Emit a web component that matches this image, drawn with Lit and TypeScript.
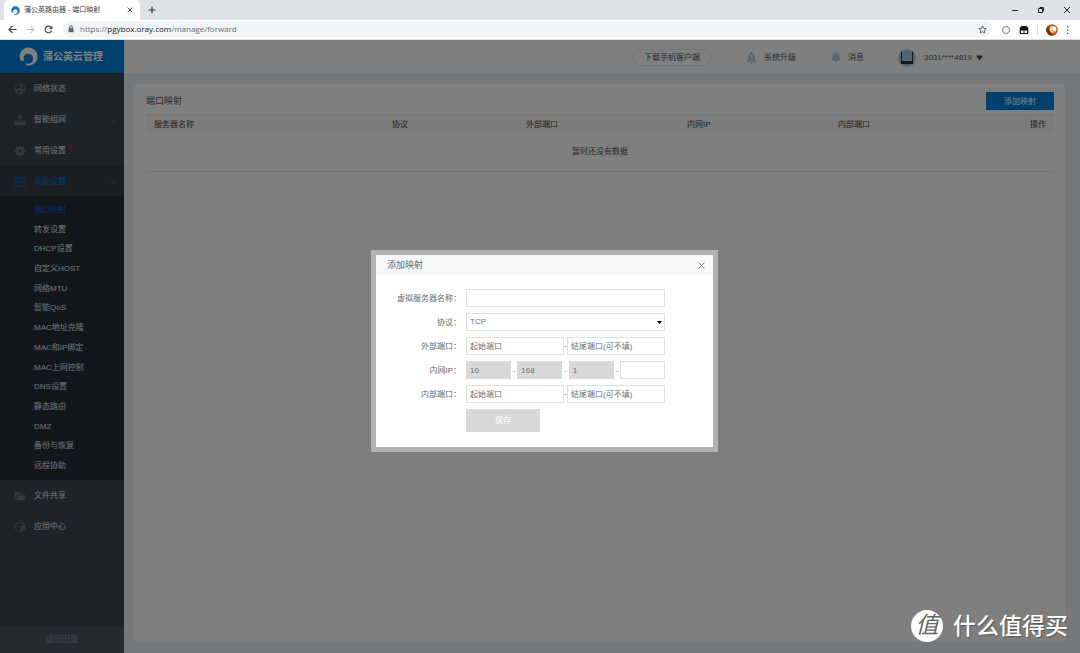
import { LitElement, html, css, svg } from "lit";
import { customElement, state } from "lit/decorators.js";

const submenu = [
  "端口映射", "转发设置", "DHCP设置", "自定义HOST", "网络MTU", "智能QoS", "MAC地址克隆",
  "MAC和IP绑定", "MAC上网控制", "DNS设置", "静态路由", "DMZ", "备份与恢复", "远程协助",
];

const swirl = html`<svg viewBox="0 0 20 20" aria-hidden="true">
  <path fill="currentColor" d="M1.500 14A9.500 9.500 0 1 1 8.500 19.400C7.500 19 6.800 18.200 6.500 17.200C7.800 17.700 9.200 17.600 10.500 17.300A5.100 5.100 0 1 0 4.900 10.500C4.600 12 4.900 13.200 5.600 14.300C4.200 14.800 2.800 14.700 1.500 14Z"/>
</svg>`;

const icons: Record<string, unknown> = {
  globe: svg`<circle cx="8" cy="8" r="7.200" fill="currentColor"/><path fill="#3c474f" d="M4.500 2.500L8 1.800L7.500 4L9 5L7 7.500L4.500 7L3 9L2 6ZM10.500 4L13 4.500L14 7L12 8.500L10 6.500ZM5 9.500L8.500 10.500L8 13L6.500 14.200L5.500 12ZM11 11L13 10.500L11.500 13Z"/>`,
  tree: svg`<path fill="currentColor" d="M5.500 1h5v5h-5zM0 10h5v5H0zM5.600 10h4.800v5H5.600zM11 10h5v5h-5zM7.600 6h.8v2.500H14V10h-.8V9.200H2.800V10H2V8.500h5.600z"/>`,
  gear: svg`<g fill="currentColor"><circle cx="8" cy="8" r="5.300"/><path d="M7 .5h2l.5 3h-3zM7 15.500h2l.5-3h-3zM.5 7v2l3 .5v-3zM15.500 7v2l-3 .5v-3zM2 3.400L3.400 2l2.500 1.700-2.200 2.200zM14 3.400L12.600 2l-2.500 1.700 2.200 2.200zM2 12.600L3.400 14l2.500-1.700-2.200-2.200zM14 12.600L12.600 14l-2.500-1.700 2.200-2.200z"/></g><circle cx="8" cy="8" r="1.900" fill="#3c474f"/>`,
  bars: svg`<path stroke="currentColor" stroke-width="1.500" d="M.5 2.500h15M.5 8h15M.5 13.500h15"/>`,
  folder: svg`<path fill="currentColor" d="M1 13V2.500h5l1.500 1.700H13V6H4.200zM4.800 7H16l-2.500 6.800H2z"/>`,
  cube: svg`<path fill="none" stroke="currentColor" d="M8 1.500L1.500 4.500v6.700L8 14.500M1.500 4.500L8 7.500l6.500-3L8 1.500"/><path fill="currentColor" d="M8.500 8L15 5v6.200L8.500 14.800z"/>`,
};

const icon = (name: string) =>
  html`<svg class="icon" viewBox="0 0 16 16" aria-hidden="true">${icons[name]}</svg>`;

const chevron = (up: boolean) => html`<svg class="chevron" viewBox="0 0 8 8" aria-hidden="true">
  <path fill="none" stroke="currentColor" d=${up ? "M1 6l3-3 3 3" : "M1 3l3 3 3-3"} /></svg>`;

@customElement("browser-bar")
class BrowserBar extends LitElement {
  static styles = css`
    :host { display: block; font: 7px/10px "Liberation Sans", "Noto Sans CJK SC", sans-serif; color: #3c4043; }
    svg { display: block; flex: none; }
    button { all: unset; display: grid; place-items: center; }
    .strip { display: flex; align-items: center; height: 20px; background: #dee1e6; padding-left: 4px; }
    .tab { display: flex; align-items: center; width: 121px; height: 20px; padding: 0 7px 0 8px; background: #fff; border-radius: 5px 5px 0 0; }
    .fav { width: 9px; color: #1272bb; margin: 0 4px 0 -1px; }
    .fav svg { width: 9px; height: 9px; }
    .title { flex: 1; white-space: nowrap; }
    .plus { margin-left: 8px; }
    .window { margin-left: auto; display: flex; gap: 18px; padding-right: 9px; }
    .bar { display: flex; align-items: center; height: 20px; background: #fff; padding: 0 11px 0 8px; box-sizing: border-box; border-bottom: 1px solid #ddd; }
    .arrows { display: flex; gap: 9px; width: 55px; }
    .pill { flex: 1; display: flex; align-items: center; height: 16px; margin-bottom: 1px; border-radius: 8px; background: #f1f3f4; padding: 0 5px 0 4px; }
    .url { all: unset; flex: 1; margin-left: 5px; color: #6b7075; font: 8px/14px "Open Sans", "Noto Sans", sans-serif; }
    .url b { font-weight: 400; color: #202124; }
    .ext { display: flex; align-items: center; gap: 8px; padding-left: 9px; }
  `;
  render() {
    return html`
      <div class="strip">
        <div class="tab">
          <span class="fav">${swirl}</span><span class="title">蒲公英路由器 - 端口映射</span>
          <button aria-label="关闭标签页"><svg width="6" height="6" viewBox="0 0 6 6"><path stroke="#3c4043" d="M.7.7l4.600 4.600M5.300.7L.7 5.300"/></svg></button>
        </div>
        <button class="plus" aria-label="新标签页"><svg width="8" height="8" viewBox="0 0 8 8"><path stroke="#333" stroke-width="1.200" d="M4 .5v7M.5 4h7"/></svg></button>
        <div class="window">
          <button aria-label="最小化"><svg width="8" height="8" viewBox="0 0 8 8"><path stroke="#222" d="M1 4.500h6"/></svg></button>
          <button aria-label="还原"><svg width="8" height="8" viewBox="0 0 8 8"><path fill="none" stroke="#222" d="M1.500 2.500h4v4h-4zM3 2.500v-1h3.500V5H5.500"/></svg></button>
          <button aria-label="关闭"><svg width="8" height="8" viewBox="0 0 8 8"><path stroke="#222" d="M1 1l6 6M7 1L1 7"/></svg></button>
        </div>
      </div>
      <div class="bar">
        <div class="arrows">
          <button aria-label="后退"><svg width="9" height="9" viewBox="0 0 9 9"><path fill="none" stroke="#444" stroke-width="1.200" d="M8.500 4.500H1M4.500 1L1 4.500 4.500 8"/></svg></button>
          <button aria-label="前进"><svg width="9" height="9" viewBox="0 0 9 9"><path fill="none" stroke="#b5b5b5" d="M.5 4.500H8M4.500 1L8 4.500 4.500 8"/></svg></button>
          <button aria-label="刷新"><svg width="9" height="9" viewBox="0 0 9 9"><path fill="none" stroke="#444" stroke-width="1.200" d="M7.600 5.500A3.300 3.300 0 1 1 7 2.300"/><path fill="#444" d="M8.400.6v3.300H5z"/></svg></button>
        </div>
        <div class="pill">
          <svg width="8" height="8" viewBox="0 0 8 8"><path fill="#5f6368" d="M1.500 3.200h5v4h-5z"/><path fill="none" stroke="#5f6368" d="M2.700 3.500V2a1.300 1.300 0 0 1 2.600 0v1.500"/></svg>
          <a class="url" href="#">https://<b>pgybox.oray.com</b>/manage/forward</a>
          <button aria-label="收藏"><svg width="9" height="9" viewBox="0 0 10 10"><path fill="none" stroke="#555" d="M5 1l1.200 2.700 2.900.3L7 6l.6 2.900L5 7.400 2.400 8.900 3 6 .9 4l2.900-.3z"/></svg></button>
        </div>
        <div class="ext">
          <svg width="10" height="10" viewBox="0 0 10 10"><circle cx="5" cy="5" r="3.500" fill="none" stroke="#a6a6a6" stroke-width="1.600"/></svg>
          <svg width="10" height="10" viewBox="0 0 10 10"><path fill="#111" d="M2.500 1h5L9.300 3v6H.7V3z"/><path fill="#fff" d="M2 5.500h2.500V8H2zM5.500 5.500H8V8H5.500z"/></svg>
          <svg width="1" height="10" viewBox="0 0 1 10"><path fill="#ddd" d="M0 0h1v10H0z"/></svg>
          <svg width="12" height="12" viewBox="0 0 12 12"><circle cx="6" cy="6" r="5.800" fill="#b65312"/><path fill="#6d2d09" d="M2 2a5.800 5.800 0 0 0 5 9.700L4 8z"/><circle cx="7" cy="5.300" r="3.400" fill="#f7dcc0"/><circle cx="7.500" cy="5.800" r="2" fill="#c9762c"/><circle cx="8" cy="5" r="2" fill="#fff"/></svg>
          <svg width="3" height="10" viewBox="0 0 3 10"><path fill="#444" d="M1 1h1.300v1.300H1zM1 4.400h1.300v1.300H1zM1 7.800h1.300v1.300H1z"/></svg>
        </div>
      </div>`;
  }
}

@customElement("side-nav")
class SideNav extends LitElement {
  static styles = css`
    :host { display: flex; flex-direction: column; width: 124px; flex: none; background: #3c474f; color: #e2e5e8; }
    a { color: inherit; text-decoration: none; }
    svg { display: block; }
    .logo { display: flex; align-items: center; height: 33px; padding-left: 19px; gap: 5px; background: #0080d8; color: #fff; font-size: 10px; font-weight: 700; }
    .logo svg { width: 19px; height: 19px; }
    .item { display: flex; align-items: center; box-sizing: border-box; height: 30px; margin-bottom: 1px; padding: 2px 8px 0 14px; }
    .icon { width: 12px; height: 12px; margin-right: 8px; color: #657079; }
    .chevron { width: 6px; height: 6px; margin-left: auto; color: #66717a; }
    .active, .active .icon { color: #0078d8; }
    .active { background: #343c44; margin-bottom: 0; }
    .dot { width: 4px; height: 4px; margin: -8px 0 0 2px; border-radius: 2px; background: #e0104c; }
    .sub { display: grid; grid-auto-rows: 1fr; align-items: center; box-sizing: border-box; height: 284px; padding: 4px 0 4px 34px; margin: 0; list-style: none; background: #262d37; }
    .current { color: #0068d8; }
    .old { margin-top: auto; height: 26px; display: grid; place-items: center; background: #4c535a; color: #929aa0; }
  `;
  render() {
    return html`
      <a class="logo" href="#">${swirl}<span>蒲公英云管理</span></a>
      <a class="item" href="#">${icon("globe")}网络状态</a>
      <a class="item" href="#">${icon("tree")}智能组网${chevron(false)}</a>
      <a class="item" href="#">${icon("gear")}常用设置<span class="dot"></span>${chevron(false)}</a>
      <a class="item active" href="#">${icon("bars")}高级设置${chevron(true)}</a>
      <ul class="sub">
        ${submenu.map((t, i) => html`<li><a class=${i ? "" : "current"} href="#">${t}</a></li>`)}
      </ul>
      <a class="item" href="#">${icon("folder")}文件共享</a>
      <a class="item" href="#">${icon("cube")}应用中心</a>
      <a class="old" href="#">返回旧版</a>`;
  }
}

@customElement("top-bar")
class TopBar extends LitElement {
  static styles = css`
    :host { display: flex; align-items: center; justify-content: flex-end; box-sizing: border-box; height: 33px; padding: 2px 97px 0 0; background: #fff; color: #555; }
    a { display: flex; align-items: center; color: inherit; text-decoration: none; }
    svg { display: block; }
    .app { border: 1px solid #e8e8e8; border-radius: 9px; height: 15px; padding: 0 10px; margin-right: 35px; }
    .link { gap: 7px; margin-right: 35px; }
    .bell { margin-right: 33px; }
    .user { gap: 7px; }
    .caret { margin-left: -3px; }
  `;
  render() {
    return html`
      <a class="app" href="#">下载手机客户端</a>
      <a class="link" href="#"><svg width="11" height="12" viewBox="0 0 11 12"><path fill="#b6cbdc" d="M5.500 0C8 1 9 3.500 8.700 6.500L9.800 8.500V10.500L7.500 9.500H3.500L1.200 10.500V8.500L2.300 6.500C2 3.500 3 1 5.500 0ZM4 10h3l-1.500 2z"/><circle cx="5.500" cy="4.500" r="1.300" fill="#fff"/></svg>系统升级</a>
      <a class="link bell" href="#"><svg width="10" height="11" viewBox="0 0 10 11"><path fill="#b6cbdc" d="M5 0l.8 1.200C8 2 8.600 3.500 8.600 5.500L9.300 8.700H.7L1.400 5.500C1.400 3.500 2 2 4.200 1.200zM3.500 9.200h3L5 10.800z"/></svg>消息</a>
      <a class="user" href="#"><svg width="20" height="20" viewBox="0 0 20 20"><circle cx="10" cy="10" r="9.500" fill="#cfe4f6"/><circle cx="10" cy="10" r="8" fill="#9fc8e9"/><path fill="#303338" d="M4 3.500h1v9.500h10V3.500h1v10l.3 2.500H3.700L4 13.500z"/></svg>3031****4819
        <svg class="caret" width="7" height="6" viewBox="0 0 7 6"><path fill="#444" d="M0 .5h7L3.500 5.500z"/></svg></a>`;
  }
}

@customElement("mapping-dialog")
class MappingDialog extends LitElement {
  @state() private proto = "TCP";
  static styles = css`
    :host { display: block; width: 337px; border: 5px solid #b2b2b2; background: #fff; color: #666; }
    header { display: flex; align-items: center; justify-content: space-between; height: 20px; padding: 0 8px 0 11px; background: #f8f8f8; font-size: 9px; }
    h2 { all: unset; }
    svg { display: block; }
    button { all: unset; cursor: pointer; }
    form { display: grid; grid-template-columns: 85px 199px; column-gap: 5px; row-gap: 6px; padding: 14px 0 15px; align-items: center; }
    .label { text-align: right; padding-top: 2px; }
    .row { display: flex; align-items: center; justify-content: space-between; }
    input, select { box-sizing: border-box; width: 100%; height: 18px; margin: 0; padding: 0 3px; border: 1px solid #e0e0e0; border-radius: 0; background: #fff; color: #707070; font: inherit; outline: none; appearance: none; }
    ::placeholder { color: #707070; opacity: 1; }
    .port { width: 98px; }
    .ip { width: 45px; }
    .ip:disabled { background: #d8d8d8; border-color: #d8d8d8; }
    .pick { display: grid; align-items: center; }
    .pick > * { grid-area: 1 / 1; }
    .pick svg { justify-self: end; margin-right: 3px; pointer-events: none; }
    .save { grid-column: 2; width: 74px; height: 23px; background: #d8d8d8; color: #fff; text-align: center; }
  `;
  private range(id: string, label: string) {
    return html`<label class="label" for=${id}>${label}：</label>
      <div class="row"><input class="port" id=${id} placeholder="起始端口" />-<input class="port" aria-label="${label}结尾" placeholder="结尾端口(可不填)" /></div>`;
  }
  render() {
    return html`
      <header><h2>添加映射</h2>
        <button aria-label="关闭"><svg width="7" height="7" viewBox="0 0 7 7"><path stroke="#888" d="M.5.5l6 6M6.500.5l-6 6"/></svg></button></header>
      <form>
        <label class="label" for="name">虚拟服务器名称：</label><input id="name" />
        <label class="label" for="proto">协议：</label>
        <div class="pick"><select id="proto" .value=${this.proto} @change=${(e: Event) => (this.proto = (e.target as HTMLSelectElement).value)}><option>TCP</option><option>UDP</option></select>
          <svg width="5" height="3" viewBox="0 0 5 3"><path d="M0 0h5L2.500 3z"/></svg></div>
        ${this.range("outer", "外部端口")}
        <label class="label" for="host">内网IP：</label>
        <div class="row">
          <input class="ip" aria-label="第一段" value="10" disabled />.<input class="ip" aria-label="第二段" value="168" disabled />.<input class="ip" aria-label="第三段" value="1" disabled />.<input class="ip" id="host" />
        </div>
        ${this.range("inner", "内部端口")}
        <button class="save" type="button">保存</button>
      </form>`;
  }
}

@customElement("app-root")
class AppRoot extends LitElement {
  static styles = css`
    :host { display: flex; flex-direction: column; min-height: 100vh; font: 8px/12px "Liberation Sans", "Noto Sans CJK SC", sans-serif; }
    .page { position: relative; flex: 1; display: flex; }
    .main { flex: 1; display: flex; flex-direction: column; background: #eaf2f9; }
    .card { flex: 1; margin: 11px 15px 11px 10px; padding: 8px 11px 0 12px; border-radius: 4px; background: #fff; color: #444; }
    .head { display: flex; justify-content: space-between; align-items: center; height: 18px; margin-bottom: 4px; }
    h1 { all: unset; font-size: 9px; color: #555; }
    .add { all: unset; box-sizing: border-box; width: 68px; height: 18px; padding-top: 2px; background: #0080d8; color: #fff; text-align: center; }
    table { width: 100%; table-layout: fixed; border-collapse: collapse; }
    th { height: 16px; padding: 2px 8px 0; font-weight: 400; text-align: left; background: #f7f7f7; border-top: 1px solid #e8e8e8; }
    th:last-child { text-align: right; }
    td { height: 38px; padding: 0; text-align: center; border-bottom: 1px solid #e8e8e8; color: #555; }
    .c1 { width: 238px; } .c2 { width: 134px; } .c3 { width: 161px; } .c4 { width: 151px; } .c5, .c6 { width: 112px; }
    .mask { position: absolute; inset: 0; display: flex; align-items: center; justify-content: center; padding: 9px 0 0 9px; background: rgba(0, 0, 0, 0.5); }
    .brand { position: absolute; right: 12px; bottom: 10px; display: flex; align-items: center; gap: 10px; color: #fff; font-size: 23px; font-weight: 500; line-height: 34px; text-shadow: 1px 1px 1px #555; }
    .seal { width: 32px; height: 32px; border-radius: 16px; background: #fff; color: #666; font-weight: 400; line-height: 31px; text-align: center; font-style: italic; text-shadow: none; }
  `;
  render() {
    return html`
      <browser-bar></browser-bar>
      <div class="page">
        <side-nav></side-nav>
        <div class="main">
          <top-bar></top-bar>
          <section class="card">
            <div class="head"><h1>端口映射</h1><button class="add">添加映射</button></div>
            <table>
              <colgroup><col class="c1" /><col class="c2" /><col class="c3" /><col class="c4" /><col class="c5" /><col class="c6" /></colgroup>
              <thead><tr>${["服务器名称", "协议", "外部端口", "内网IP", "内部端口", "操作"].map((t) => html`<th>${t}</th>`)}</tr></thead>
              <tbody><tr><td colspan="6">暂时还没有数据</td></tr></tbody>
            </table>
          </section>
        </div>
        <div class="mask"><mapping-dialog role="dialog" aria-label="添加映射"></mapping-dialog></div>
        <div class="brand"><span class="seal">值</span>什么值得买</div>
      </div>`;
  }
}
